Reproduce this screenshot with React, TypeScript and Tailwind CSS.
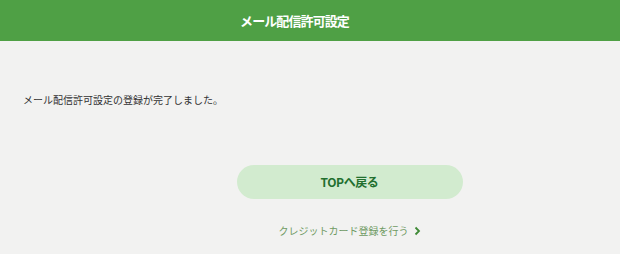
import React from "react";

export default function App() {
  return (
    <div
      className="w-[620px] h-[254px] bg-[#f2f2f1] overflow-hidden"
      style={{ fontFamily: '"Noto Sans CJK JP", "Noto Sans", sans-serif' }}
    >
      <header className="h-[41px] bg-[#4fa045] flex items-center justify-center pr-[31px]">
        <h1 className="text-white text-[13px] font-bold tracking-[-0.9px]">メール配信許可設定</h1>
      </header>
      <div className="pt-[51px] pl-[23px]">
        <p className="text-[10px] leading-[16px] text-[#333333]">メール配信許可設定の登録が完了しました。</p>
      </div>
      <div className="pt-[57px] pl-[79px] flex flex-col items-center">
        <button className="w-[226px] h-[34px] rounded-full bg-[#d2ebcf] text-[#22702f] text-[12px] font-bold tracking-[-0.4px] flex items-center justify-center">
          TOPへ戻る
        </button>
        <a className="mt-[24px] flex items-center gap-[5px] text-[10px] text-[#6f9a63]">
          <span>クレジットカード登録を行う</span>
          <svg width="7" height="10" viewBox="0 0 7 10" fill="none">
            <path d="M1.5 1.5 L5 5 L1.5 8.5" stroke="#3f8a36" strokeWidth="1.8" />
          </svg>
        </a>
      </div>
    </div>
  );
}
